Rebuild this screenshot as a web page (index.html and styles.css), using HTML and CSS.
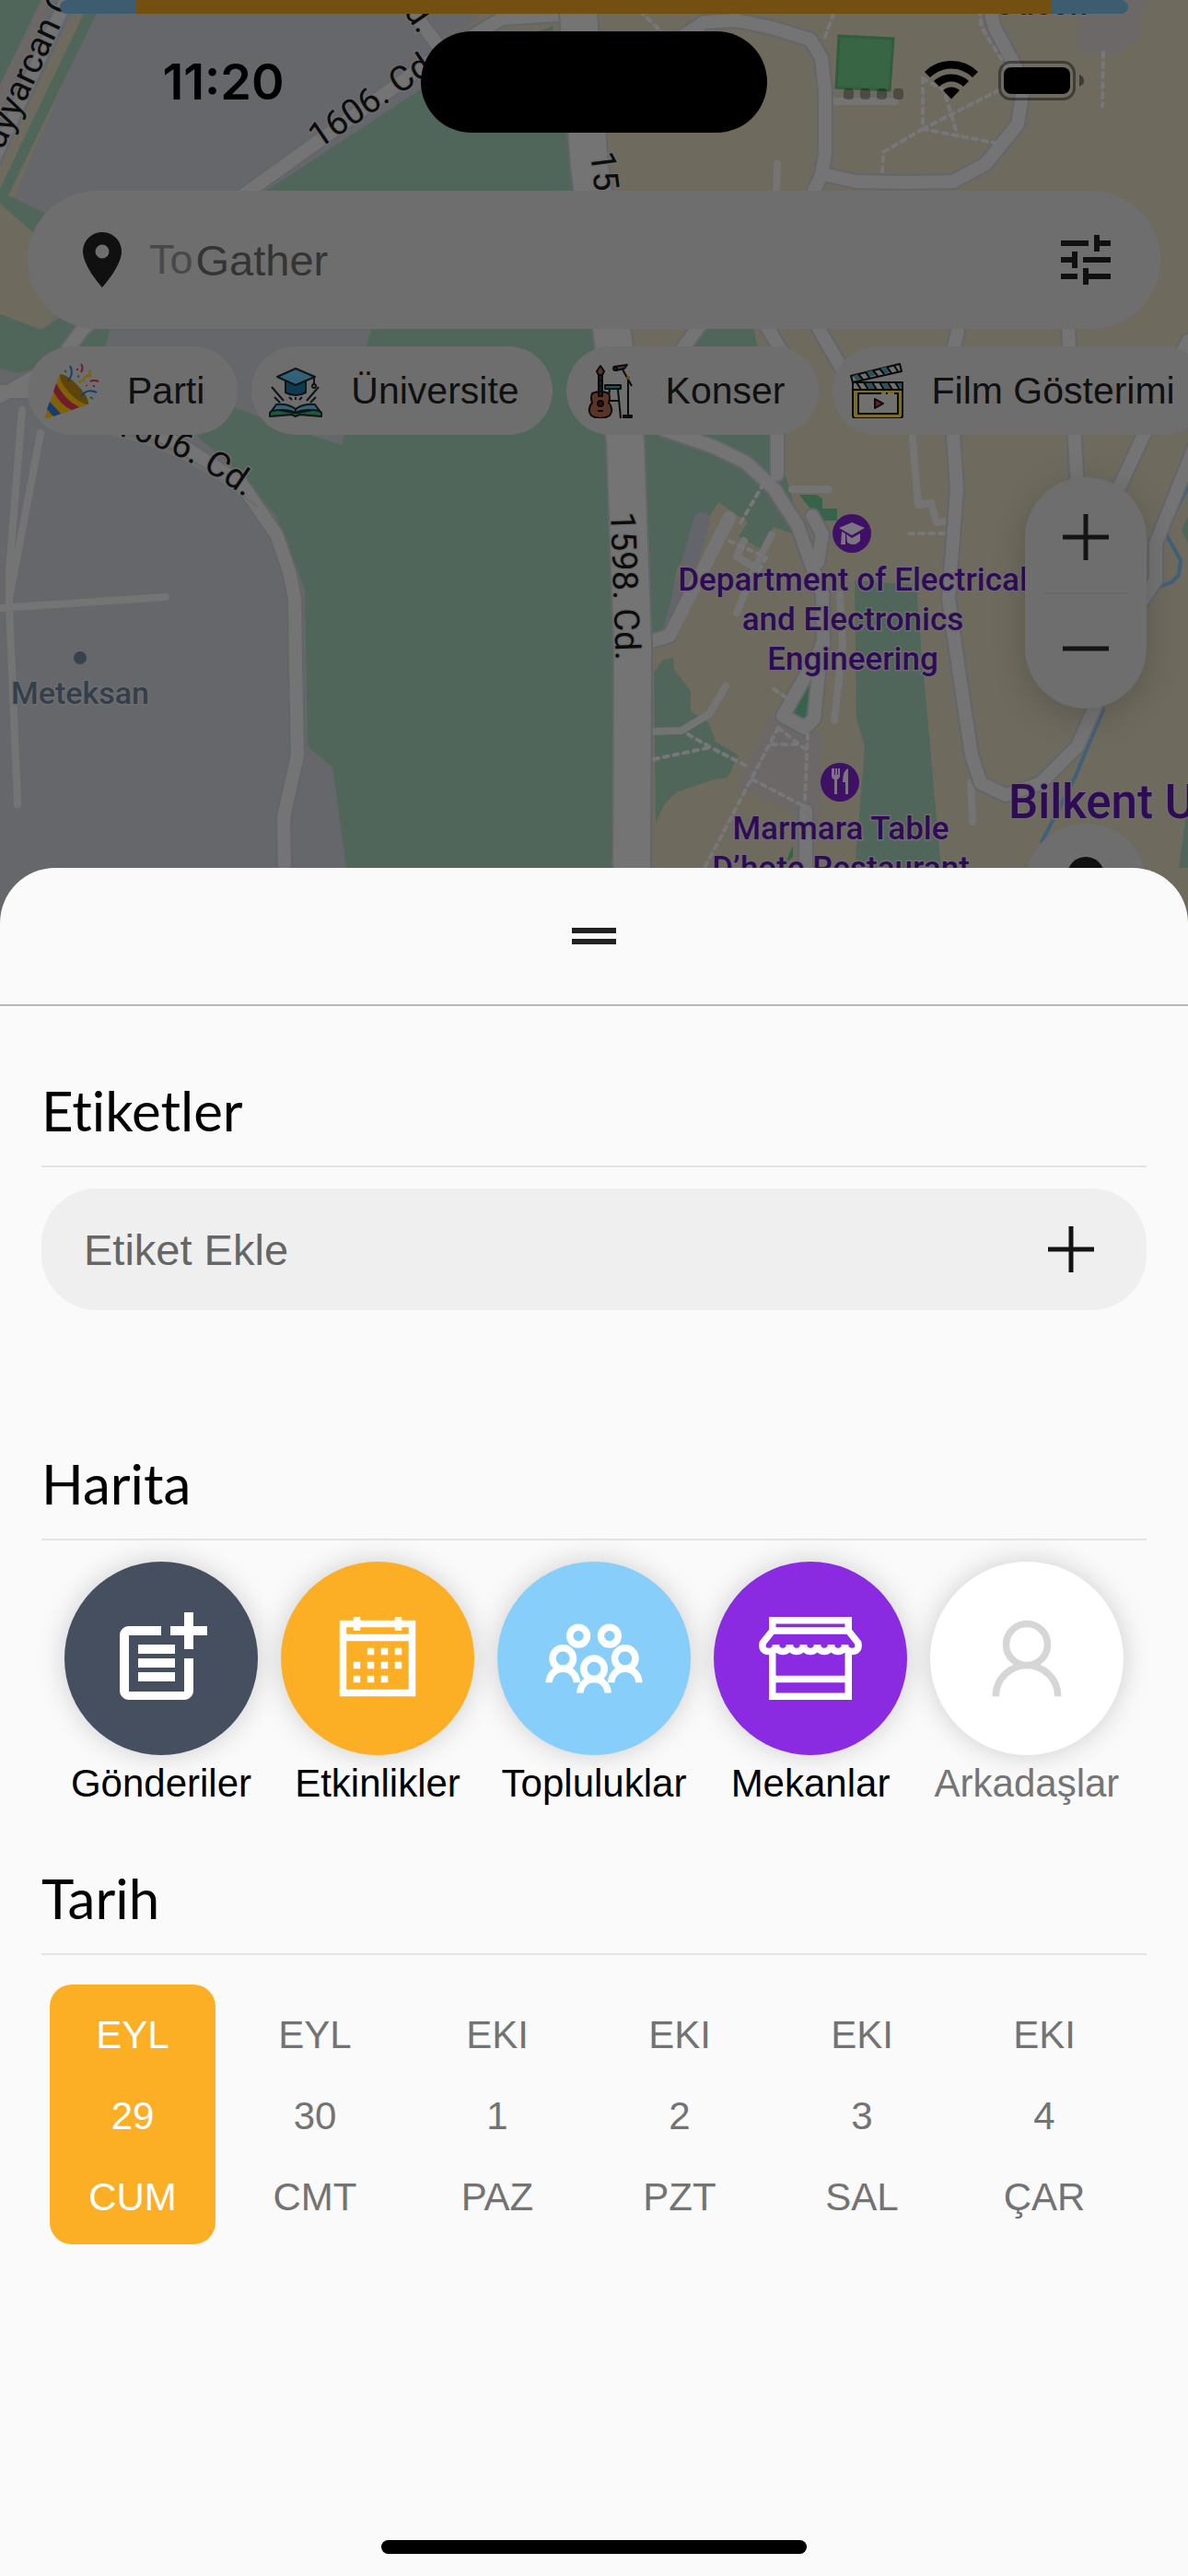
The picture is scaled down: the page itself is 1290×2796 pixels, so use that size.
FILE: index.html
```html
<!DOCTYPE html>
<html lang="tr">
<head>
<meta charset="utf-8">
<meta name="viewport" content="width=device-width, initial-scale=1">
<title>ToGather</title>
<link rel="stylesheet" href="styles.css">
</head>
<body>
<div class="screen">
  <main class="map-view">
    <svg class="map" viewBox="0 0 1290 1030" preserveAspectRatio="xMidYMin slice" aria-hidden="true">
      <rect width="1290" height="1030" class="land"/>
      <g class="campus">
        <path d="M620 0H1290V1030H690Z"/>
        <path d="M85 0H112L95 30L0 250V180Z"/>
        <path d="M0 221L48 254L80 300L60 343L45 358L0 341Z"/>
        <path d="M520 15H620V40L500 35Z"/>
      </g>
      <g class="park">
        <path d="M0 0H48L0 100Z"/>
        <path d="M98 0H112L9 212L48 231L62 275L0 221V205Z"/>
        <path d="M0 341L45 358L72 340H124L112 385L18 405L0 400Z"/>
        <path d="M262 225L490 75L600 28L680 500L690 942H376L361 833L334 810L331 640L300 560L262 515L212 472L253 442L337 472L371 483L403 357V225Z"/>
        <path d="M699 465H838L860 540L869 582L840 572L828 597L802 582L812 567L780 545L735 618L722 690L707 695Z"/>
        <path d="M775 340H815L825 390H740Z"/>
        <path d="M710 730L720 716L731 714L732 727L750 750V772L770 785L777 805L802 820L790 844L775 846L735 860L722 872L712 893Z"/>
        <path d="M928 630L995 635L1000 700L1010 810L1022 945H928L939 810L930 780Z"/>
        <path d="M1290 870L1280 942H1290ZM1290 560L1283 575L1290 590Z"/>
      </g>
      <g class="block">
        <path d="M1169 0H1245L1237 20V48H1219V57H1169Z"/>
        <path d="M835 778L893 795L890 885L886 900L868 885L800 853Z"/>
        <path d="M45 0H56L0 118V92Z"/>
      </g>
      <g class="wood">
        <path d="M868 537H886L893 541V552H909V565H893L882 555Z"/>
        <path d="M882 735L875 785L852 775Z"/>
        <path d="M861 918V930L852 938Z"/>
      </g>
      <path class="pitch" d="M911 39L970 42L966 98L908 95Z"/>
      <g class="water">
        <path d="M1290 528L1265 578L1282 608L1280 624L1272 632L1247 641"/>
        <path d="M1198 770L1168 842L1154 870L1131 914"/>
      </g>
      <g class="lanes">
        <path d="M24 445L10 620V655L19 873M44 470L10 650M0 660L180 648"/>
        <path d="M860 531H900M905 110H972M844 178L843 215M912 645L915 700L906 782M990 465L997 548L1011 546L1017 567L1033 565M1054 850L1056 892M707 794L740 793L770 775L788 745M808 587L800 604L820 616L838 580M820 616L800 665"/>
      </g>
      <g class="roads-edge">
        <path d="M72 0L-10 180M435 -5L485 62M225 240L465 68L545 20L620 15M225 240L90 357L62 395L0 430"/>
        <path d="M0 425H30L130 450L200 485L262 525L300 580L314 620L320 650L321 720L323 820L308 887L309 945"/>
        <path d="M720 466L775 485L810 502L840 530L866 570L880 610L893 645L894 700L850 777L874 790L884 780L892 700M882 560L893 580L888 610"/>
        <path d="M762 565L727 690L705 697M844 465V515M740 40L765 24L799 22L838 30L880 43L892 63L896 100V167L892 190L880 215"/>
        <path d="M898 190L930 197L985 198L1035 197L1070 178L1105 135L1112 90L1080 30L1072 0M885 350L920 410M1040 360L1030 400L1039 530L1030 650L1040 720L1055 820L1065 850L1092 863L1130 850L1170 810L1190 765M1160 357L1170 530M1290 370L1210 540M1300 478L1255 590V630L1240 652M875 880V945M740 380L762 350M830 350L860 400"/>
      </g>
      <g class="roads">
        <path d="M72 0L-10 180M435 -5L485 62M225 240L465 68L545 20L620 15M225 240L90 357L62 395L0 430"/>
        <path d="M0 425H30L130 450L200 485L262 525L300 580L314 620L320 650L321 720L323 820L308 887L309 945"/>
        <path d="M720 466L775 485L810 502L840 530L866 570L880 610L893 645L894 700L850 777L874 790L884 780L892 700M882 560L893 580L888 610"/>
        <path d="M792 562L727 690L705 697M844 465V515M740 40L765 24L799 22L838 30L880 43L892 63L896 100V167L892 190L880 215"/>
        <path d="M898 190L930 197L985 198L1035 197L1070 178L1105 135L1112 90L1080 30L1072 0M885 350L920 410M1040 360L1030 400L1039 530L1030 650L1040 720L1055 820L1065 850L1092 863L1130 850L1170 810L1190 765M1160 357L1170 530M1290 370L1210 540M1300 478L1255 590V630L1240 652M875 880V945M740 380L762 350M830 350L860 400"/>
      </g>
      <path class="avenue-edge" d="M627 0L640 180L666 370L679 480L687 700L686 945"/>
      <path class="avenue" d="M627 0L640 180L666 370L679 480L687 700L686 945"/>
      <g class="paths">
        <path d="M1002 85V140L1090 95M1002 140L1080 155M1002 140L959 165L958 190M1002 85L1025 98L1040 148M695 12L722 38M905 15L894 45M1062 0L1066 30L1092 72M1198 57L1197 115"/>
        <path d="M829 525L804 568M792 587L832 605L824 620M987 579H1026M747 797L775 813L812 832M710 824L772 811M845 790L765 942M877 797L873 890M845 790L877 815M838 808H868M817 846L871 874M840 748L852 756"/>
      </g>
      <g class="street-names">
        <path id="curve" class="guide" d="M122 472Q195 484 280 550"/>
        <text transform="translate(-6 182) rotate(-65)">Tayyarcan Cd.</text>
        <text transform="translate(346 162) rotate(-34)">1606. Cd.</text>
        <text transform="translate(455 38) rotate(56)" text-anchor="end">Cd.</text>
        <text transform="translate(641 166) rotate(83)">1598. Cd.</text>
        <text transform="translate(663 556) rotate(88)">1598. Cd.</text>
        <text><textPath href="#curve">1606. Cd.</textPath></text>
      </g>
      <circle cx="87" cy="714" r="7" class="town-dot"/>
      <text x="12" y="764" class="town">Meteksan</text>
      <g class="places">
        <text x="1130" y="16">Odeon</text>
        <text x="926" y="641">Department of Electrical</text>
        <text x="926" y="684">and Electronics</text>
        <text x="926" y="727">Engineering</text>
        <text x="913" y="911">Marmara Table</text>
        <text x="913" y="954">D’hote Restaurant</text>
      </g>
      <text x="1095" y="888" class="campus-name">Bilkent U</text>
      <g class="poi">
        <circle cx="925" cy="579" r="21"/>
        <circle cx="912" cy="849" r="21"/>
      </g>
      <g class="poi-mark">
        <path d="M911 573L925 567L939 573L925 581ZM914 577L918 579V591H913ZM919 580L925 584L934 579V587Q928 594 920 589Z"/>
        <path d="M903 834V842Q903 845 906 846V862H909V846Q912 845 912 842V834H910V841H909V834H907V841H906V834ZM921 834Q915 836 915 849H918V862H921Z"/>
      </g>
    </svg>

    <div class="route-bar"></div>

    <header class="status">
      <time class="clock">11:20</time>
      <div class="island"></div>
      <div class="signals">
        <svg width="66" height="42" viewBox="0 0 66 42" aria-hidden="true" fill="#000" fill-opacity=".3"><rect y="30" width="11" height="12" rx="4"/><rect x="18" y="30" width="11" height="12" rx="4"/><rect x="36" y="30" width="11" height="12" rx="4"/><rect x="54" y="30" width="11" height="12" rx="4"/></svg>
        <svg width="58" height="42" viewBox="0 0 58 42" role="img" aria-label="Wi-Fi"><path d="M29 0Q46 0 58 12L52 18Q42 8.500 29 8.500T6 18L0 12Q12 0 29 0ZM29 14.500Q40 14.500 48 22L42 28Q36 22.500 29 22.500T16 28L10 22Q18 14.500 29 14.500ZM29 28.500Q34 28.500 38 32L29 41.500L20 32Q24 28.500 29 28.500Z"/></svg>
        <svg width="93" height="43" viewBox="0 0 93 43" role="img" aria-label="Pil"><rect x="1.500" y="1.500" width="81" height="40" rx="12" fill="none" stroke="#000" stroke-opacity=".42" stroke-width="3"/><rect x="6" y="7" width="72" height="29" rx="8"/><path d="M88 15q5 2 5 6.500T88 28z" fill-opacity=".45"/></svg>
      </div>
    </header>

    <form class="search">
      <svg class="icon" viewBox="0 0 24 24" aria-hidden="true"><path d="M12 2C8.130 2 5 5.130 5 9c0 5.250 7 13 7 13s7-7.750 7-13c0-3.870-3.130-7-7-7zm0 9.500a2.500 2.500 0 0 1 0-5 2.500 2.500 0 0 1 0 5z"/></svg>
      <label class="search-label" for="search">To</label>
      <input class="search-input" id="search" type="text" placeholder="Gather">
      <button class="plain" type="button" aria-label="Filtreler">
        <svg class="icon" viewBox="0 0 24 24"><path d="M3 17v2h6v-2H3zM3 5v2h10V5H3zm10 16v-2h8v-2h-8v-2h-2v6h2zM7 9v2H3v2h4v2h2V9H7zm14 4v-2H11v2h10zm-6-4h2V7h4V5h-4V3h-2v6z"/></svg>
      </button>
    </form>

    <nav class="chips">
      <button class="chip" type="button">
        <svg class="chip-icon" viewBox="0 0 60 60" aria-hidden="true" fill="none" stroke-width="2">
          <path fill="#7e6205" d="M17 12L1 58Q1 61 4 60L48 45Z"/>
          <path fill="#5f4409" d="M17 12Q25 12 37 25T48 45Q38 44 27 32T17 12Z"/>
          <path fill="#701c2c" d="M13 22L10 31Q18 46 30 51L38 48Q22 40 13 22Z"/>
          <path fill="#163c76" d="M6 42L3 50L10 58L18 55Z"/>
          <path stroke="#163c76" d="M28 3Q33 12 25 20M40 36Q47 27 57 32"/>
          <path stroke="#701c2c" d="M40 1Q43 5 40 10M36 6V8M50 20Q54 18 59 20M46 24V25M53 25H55"/>
          <path stroke="#7e6205" d="M51 8Q48 10 50 14Q43 13 43 19L37 21"/>
          <path stroke="#19593a" d="M22 8L24 10M36 15L38 14M50 37L53 39"/>
        </svg>Parti</button>
      <button class="chip" type="button">
        <svg class="chip-icon" viewBox="0 0 60 60" aria-hidden="true" fill="none" stroke="#101416" stroke-width="2" stroke-linejoin="round">
          <path fill="#0e3a52" d="M19 18V32Q30 38 41 32V18Z"/>
          <path fill="#336177" d="M10 15L30 6L51 15L30 24Z"/>
          <path d="M50 16V23M4 26L17 41M55 26L42 41M7 37L13 43M52 37L46 43M23 37L26 40M37 37L34 40M30 37V40"/><circle cx="50" cy="25" r="2"/>
          <path fill="#1b5b3b" d="M2 54L6 50L28 54H32L54 50L58 54V58L34 56L30 58L26 56L2 58Z"/>
          <path fill="#336177" d="M4 52L9 45Q22 44 30 50Q38 44 51 45L56 52Q40 49 30 54Q20 49 4 52Z"/>
          <path d="M30 49V55"/>
        </svg>Üniversite</button>
      <button class="chip" type="button">
        <svg class="chip-icon" viewBox="0 0 60 60" aria-hidden="true" fill="none" stroke="#0b0b0b" stroke-width="2" stroke-linejoin="round">
          <path d="M29 29L27 42M38 29L41 60M28 41H39M43 7L48 16L53 25M49 16V57"/>
          <path fill="#12585a" d="M24 24H41V28H24Z"/>
          <path fill="#5b3428" d="M10 33Q19 29 28 33Q30 38 28 43Q34 50 29 57Q19 63 9 57Q4 50 10 43Q8 38 10 33Z"/>
          <path fill="#191c2f" d="M17 12H21V36H17Z"/>
          <path fill="#5b3428" d="M19 3L23 9L21 13H17L15 9Z"/>
          <circle cx="19" cy="44" r="3" fill="#281510"/><path d="M16 52H22M17 19H21M17 25H21M17 31H21"/>
          <path fill="#5c3339" d="M34 4L48 2L45 6L36 8Z"/><circle cx="35" cy="6" r="2" fill="#191c2f"/>
          <circle cx="49" cy="16" r="1" stroke="#744615"/><path fill="#18273e" d="M44 57H53V59H44Z"/>
        </svg>Konser</button>
      <button class="chip" type="button">
        <svg class="chip-icon" viewBox="0 0 60 60" aria-hidden="true" fill="none" stroke="#080808" stroke-width="2" stroke-linejoin="round">
          <path fill="#70706f" d="M2 14L55 1L57 9L4 21Z"/>
          <path fill="#2b525c" stroke="none" d="M4 14L10 12L14 17L8 19ZM18 10L25 8L29 13L22 15ZM33 6L41 4L45 10L37 12Z"/>
          <path d="M10 12L15 18M18 10L22 16M26 8L31 14M33 6L38 12M41 4L46 11M49 3L53 9"/>
          <path fill="#7c6c29" d="M4 28H58V57Q58 60 55 60H7Q4 60 4 57Z"/>
          <path fill="#70706f" d="M4 21H58V29H4Z"/>
          <path fill="#2b525c" stroke="none" d="M17 22H24L29 28H22ZM34 22H41L46 28H39ZM51 22H57V28Z"/>
          <path d="M8 21L13 29M16 21L21 29M25 21L30 29M33 21L38 29M42 21L47 29M50 21L55 29"/>
          <path fill="#70706f" d="M35 33H10V55H53V33H49M40 33H42"/>
          <path fill="#6a1f22" d="M28 39L37 44L28 49Z"/>
        </svg>Film Gösterimi</button>
    </nav>

    <div class="controls">
      <div class="zoom">
        <button class="plain" type="button" aria-label="Yakınlaştır"><svg class="sign" viewBox="0 0 50 50"><path d="M25 0V50M0 25H50"/></svg></button>
        <button class="plain" type="button" aria-label="Uzaklaştır"><svg class="sign" viewBox="0 0 50 50"><path d="M0 25H50"/></svg></button>
      </div>
      <button class="locate" type="button" aria-label="Konumum"><svg width="60" height="60" viewBox="0 0 60 60"><circle cx="30" cy="20" r="20"/></svg></button>
    </div>
  </main>

  <section class="sheet">
    <div class="sheet-head"><button class="grip" type="button" aria-label="Paneli sürükle"></button></div>
    <div class="sheet-body">
      <h2 class="heading">Etiketler</h2>
      <form class="tag-field">
        <input class="tag-input" type="text" placeholder="Etiket Ekle" aria-label="Etiket Ekle">
        <button class="plain" type="button" aria-label="Ekle"><svg class="sign" viewBox="0 0 50 50"><path d="M25 0V50M0 25H50"/></svg></button>
      </form>

      <h2 class="heading">Harita</h2>
      <div class="layers">
        <button class="layer" type="button" aria-pressed="true">
          <span class="disc disc-posts"><svg viewBox="0 0 24 24"><path fill="#fff" d="M17 19.220H5V7h7V5H5c-1.100 0-2 .9-2 2v12c0 1.100.9 2 2 2h12c1.100 0 2-.9 2-2v-7h-2zM19 2h-2v3h-3v2h3v3h2V7h3V5h-3zM7 9h8v2H7zM7 12h8v2H7zM7 15h8v2H7z"/></svg></span>
          Gönderiler</button>
        <button class="layer" type="button" aria-pressed="true">
          <span class="disc disc-events"><svg viewBox="0 0 32 32"><path d="M6 6H26V26H6ZM6 10H26M10 4V8M22 4V8M13 14h2M17 14h2M21 14h2M9 18h2M13 18h2M17 18h2M21 18h2M9 22h2M13 22h2M17 22h2"/></svg></span>
          Etkinlikler</button>
        <button class="layer" type="button" aria-pressed="true">
          <span class="disc disc-groups"><svg viewBox="0 0 32 32"><circle cx="11.500" cy="9.500" r="2.500"/><circle cx="20.500" cy="9.500" r="2.500"/><circle cx="7" cy="16" r="3"/><circle cx="25" cy="16" r="3"/><circle cx="16" cy="19" r="3"/><path d="M3 23a4 4 0 0 1 8 0M21 23a4 4 0 0 1 8 0M12 26a4 4 0 0 1 8 0"/></svg></span>
          Topluluklar</button>
        <button class="layer" type="button" aria-pressed="true">
          <span class="disc disc-venues"><svg viewBox="0 0 32 32"><path d="M5 14V27H27V14M5 22H27M5 8V5H27V8ZM5 8L2.200 11.500Q1.700 14 4 14Q6 14 6 12a2 2 0 0 0 4 0a2 2 0 0 0 4 0a2 2 0 0 0 4 0a2 2 0 0 0 4 0a2 2 0 0 0 4 0Q26 14 28 14Q30.300 14 29.800 11.500L27 8"/></svg></span>
          Mekanlar</button>
        <button class="layer layer-off" type="button" aria-pressed="false">
          <span class="disc disc-friends"><svg viewBox="0 0 32 32"><circle cx="16" cy="12" r="6"/><path d="M7 27a9 9 0 0 1 18 0"/></svg></span>
          Arkadaşlar</button>
      </div>

      <h2 class="heading">Tarih</h2>
      <div class="dates">
        <button class="date date-on" type="button" aria-pressed="true"><span>EYL</span><span>29</span><span>CUM</span></button>
        <button class="date" type="button"><span>EYL</span><span>30</span><span>CMT</span></button>
        <button class="date" type="button"><span>EKI</span><span>1</span><span>PAZ</span></button>
        <button class="date" type="button"><span>EKI</span><span>2</span><span>PZT</span></button>
        <button class="date" type="button"><span>EKI</span><span>3</span><span>SAL</span></button>
        <button class="date" type="button"><span>EKI</span><span>4</span><span>ÇAR</span></button>
      </div>
    </div>
    <div class="home-bar"></div>
  </section>
</div>
</body>
</html>
```
FILE: styles.css
```css
* {
  box-sizing: border-box;
}

body {
  margin: 0;
  background: #fafafa;
  color: #000;
  font-family: "Liberation Sans", Arial, sans-serif;
}

button,
input {
  margin: 0;
  padding: 0;
  border: 0;
  background: none;
  color: inherit;
  font: inherit;
}

svg {
  display: block;
}

.screen {
  display: flex;
  flex-direction: column;
  min-height: 100vh;
}

/* Dimmed map behind the sheet */
.map-view {
  position: relative;
  display: flex;
  flex-direction: column;
  overflow: hidden;
  color: #101010;
  fill: #101010;
}

.map {
  position: absolute;
  inset: 0;
  width: 100%;
  height: 100%;
}

.land { fill: #66676b; }
.campus { fill: #6e6a5e; }
.park { fill: #50665a; }
.block { fill: #6b6867; }
.wood { fill: #37634a; }
.pitch { fill: #386543; stroke: #2f5e3c; stroke-width: 3; }

.water,
.lanes,
.roads,
.roads-edge,
.paths,
.avenue,
.avenue-edge {
  fill: none;
  stroke-linejoin: round;
  stroke-linecap: round;
}

.water { stroke: #40607a; stroke-width: 4; }
.lanes { stroke: #747474; stroke-width: 8; }
.roads-edge { stroke: #63656b; stroke-width: 18; }
.roads { stroke: #747474; stroke-width: 14; }
.avenue-edge { stroke: #63656b; stroke-width: 44; }
.avenue { stroke: #747474; stroke-width: 40; }
.paths { stroke: #77777a; stroke-width: 4; stroke-dasharray: 5 6; }
.guide { fill: none; }

.street-names,
.town,
.places,
.campus-name {
  font-family: Roboto, sans-serif;
  paint-order: stroke;
  stroke: #6e6e6e;
  stroke-width: 3;
}

.street-names { fill: #0c0c0c; font-size: 38px; }
.town { fill: #333f4b; font-size: 34px; font-weight: 500; }
.town-dot { fill: #36434e; }
.places { fill: #300b55; font-size: 35px; font-weight: 500; text-anchor: middle; }
.campus-name { fill: #300b55; font-size: 51px; font-weight: 500; }
.poi { fill: #3f1166; }
.poi-mark { fill: #7c7480; }

.route-bar {
  position: absolute;
  top: 0;
  left: 65px;
  right: 65px;
  height: 15px;
  border-radius: 8px;
  background: linear-gradient(to right, #3d5c70 83px, #734f11 83px calc(100% - 84px), #3d5c70 calc(100% - 84px));
}

.status {
  position: relative;
  display: grid;
  grid-template-columns: 1fr 376px 1fr;
  align-items: center;
  padding-top: 34px;
  fill: #000;
}

.clock {
  padding-left: 28px;
  color: #000;
  font: 600 54px/60px Inter, sans-serif;
  text-align: center;
}

.island {
  height: 110px;
  border-radius: 55px;
  background: #000;
}

.signals {
  display: flex;
  justify-content: center;
  gap: 22px;
  padding: 0 30px 4px 0;
}

.search {
  position: relative;
  display: flex;
  align-items: center;
  height: 150px;
  margin: 63px 30px 0;
  padding: 0 45px;
  border-radius: 75px;
  background: #6e6e6e;
}

.icon {
  width: 72px;
  height: 72px;
}

.search-label {
  margin: 0 3px 0 15px;
  color: #484848;
  font-size: 45px;
}

.search-input {
  flex: 1;
  min-width: 0;
  font-size: 47px;
}

.search-input::placeholder {
  color: #343434;
  opacity: 1;
}

.chips {
  position: relative;
  display: flex;
  gap: 15px;
  margin-top: 19px;
  padding-left: 30px;
  overflow: hidden;
}

.chip {
  display: flex;
  flex: none;
  align-items: center;
  gap: 30px;
  height: 96px;
  padding: 0 36px 0 18px;
  border-radius: 48px;
  background: #6e6e6e;
  font-size: 41px;
  white-space: nowrap;
}

.chip-icon {
  width: 60px;
  height: 60px;
}

.controls {
  position: relative;
  display: flex;
  flex-direction: column;
  align-self: flex-end;
  gap: 125px;
  width: 132px;
  margin: 46px 45px 0 0;
}

.zoom {
  display: flex;
  flex-direction: column;
  padding: 5px 21px 6px;
  border-radius: 66px;
  background: #6e6e6e;
  box-shadow: 0 9px 36px rgb(0 0 0 / 18%);
}

.zoom .plain {
  display: grid;
  place-items: center;
  height: 120px;
}

.zoom .plain + .plain {
  border-top: 2px solid #686868;
}

.plain {
  flex: none;
}

.sign {
  width: 50px;
  height: 50px;
  fill: none;
  stroke: #141414;
  stroke-width: 5;
}

.locate {
  display: grid;
  justify-content: center;
  height: 132px;
  padding-top: 36px;
  border-radius: 50%;
  background: #6e6e6e;
}

/* Filter sheet */
.sheet {
  position: relative;
  display: flex;
  flex: 1;
  flex-direction: column;
  margin-top: -84px;
  border-radius: 60px 60px 0 0;
  background: #fafafa;
}

.sheet-head {
  display: flex;
  justify-content: center;
  align-items: center;
  height: 150px;
  border-bottom: 2px solid #b8b8b8;
}

.grip {
  width: 48px;
  height: 18px;
  border: solid #212121;
  border-width: 6px 0;
}

.sheet-body {
  padding: 77px 45px 0;
}

.heading {
  margin: 0;
  padding-bottom: 24px;
  border-bottom: 2px solid #e4e4e4;
  font: 400 60px/72px Lato, sans-serif;
  font-variant-ligatures: none;
}

.tag-field {
  display: flex;
  align-items: center;
  height: 132px;
  margin: 23px 0 152px;
  padding: 0 57px 0 46px;
  border-radius: 60px;
  background: #efefef;
}

.tag-input {
  flex: 1;
  min-width: 0;
  font-size: 47px;
}

.tag-input::placeholder {
  color: #666;
  opacity: 1;
}

.layers {
  display: flex;
  justify-content: space-between;
  margin: 23px 25px 64px;
}

.layer {
  display: flex;
  flex-direction: column;
  align-items: center;
  gap: 7px;
  width: 210px;
  font-size: 42px;
  line-height: 48px;
}

.layer-off {
  color: #757575;
}

.disc {
  display: grid;
  place-items: center;
  width: 210px;
  height: 210px;
  border-radius: 50%;
  box-shadow: 0 0 30px rgb(0 0 0 / 18%);
}

.disc svg {
  width: 120px;
  height: 120px;
}

.disc-events svg,
.disc-groups svg,
.disc-venues svg {
  fill: none;
  stroke: #fff;
  stroke-width: 2;
}

.disc-friends svg {
  fill: none;
  stroke: #d6d6d6;
  stroke-width: 2;
}

.disc-posts { background: #464f5f; }
.disc-events { background: #fcaf25; }
.disc-groups { background: #88cefb; }
.disc-venues { background: #8a2be2; }
.disc-friends { background: #fff; }

.dates {
  display: flex;
  justify-content: space-between;
  margin: 32px 21px 0 9px;
}

.date {
  display: flex;
  flex-direction: column;
  align-items: center;
  gap: 40px;
  width: 180px;
  padding: 31px 0 27px;
  border-radius: 24px;
  color: #737373;
  font-size: 42px;
  line-height: 48px;
}

.date-on {
  background: #fcaf25;
  color: #fff;
}

.home-bar {
  width: 462px;
  height: 15px;
  margin: auto auto 24px;
  border-radius: 8px;
  background: #000;
}
```
